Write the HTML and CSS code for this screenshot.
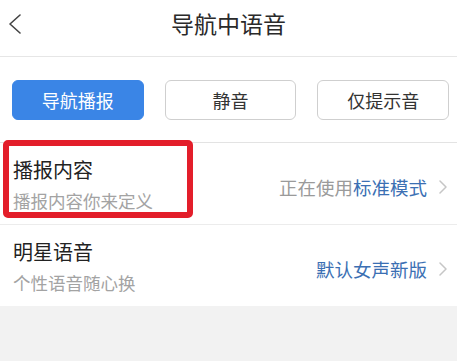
FILE: index.html
```html
<!DOCTYPE html>
<html lang="zh-CN">
<head>
<meta charset="utf-8">
<title>导航中语音</title>
<link rel="stylesheet" href="styles.css">
</head>
<body>
<div class="page">
  <header class="header">
    <span class="back">
      <svg width="14" height="20" viewBox="0 0 14 20"><polyline points="12,1 2,10 12,19" fill="none" stroke="#444" stroke-width="1.6" stroke-linecap="round" stroke-linejoin="round"/></svg>
    </span>
    <h1 class="title">导航中语音</h1>
  </header>
  <section class="modes">
    <button class="mode active">导航播报</button>
    <button class="mode">静音</button>
    <button class="mode">仅提示音</button>
  </section>
  <ul class="list">
    <li class="row">
      <div class="left">
        <div class="name">播报内容</div>
        <div class="desc">播报内容你来定义</div>
      </div>
      <div class="right"><span class="muted">正在使用</span><span class="link">标准模式</span>
        <svg class="chev" width="10" height="14" viewBox="0 0 10 14"><polyline points="2,1 8,7 2,13" fill="none" stroke="#c6c6c6" stroke-width="1.5" stroke-linecap="round" stroke-linejoin="round"/></svg>
      </div>
      <span class="highlight"></span>
    </li>
    <li class="row">
      <div class="left">
        <div class="name">明星语音</div>
        <div class="desc">个性语音随心换</div>
      </div>
      <div class="right"><span class="link">默认女声新版</span>
        <svg class="chev" width="10" height="14" viewBox="0 0 10 14"><polyline points="2,1 8,7 2,13" fill="none" stroke="#c6c6c6" stroke-width="1.5" stroke-linecap="round" stroke-linejoin="round"/></svg>
      </div>
    </li>
  </ul>
</div>
</body>
</html>
```
FILE: styles.css
```css
* { box-sizing: border-box; }
html, body { margin: 0; padding: 0; }
body {
  background: #f2f2f2;
  font-family: "Noto Sans CJK SC", "Noto Sans", sans-serif;
  color: #222;
}
.page { width: 457px; }
.header {
  height: 57px;
  background: #fff;
  border-bottom: 1px solid #e6e6e6;
  display: flex;
  align-items: flex-start;
  position: relative;
}
.back {
  position: absolute;
  left: 8px;
  top: 14px;
  display: block;
  line-height: 0;
}
.title {
  margin: 0;
  width: 100%;
  text-align: center;
  font-size: 23px;
  font-weight: normal;
  line-height: 46px;
  color: #2a2a2a;
}
.modes {
  background: #fff;
  display: grid;
  grid-template-columns: repeat(3, 1fr);
  gap: 21px;
  padding: 23px 8px 22px 12px;
  border-bottom: 1px solid #e3e3e3;
}
.mode {
  height: 40px;
  border: 1px solid #cfcfcf;
  border-radius: 6px;
  background: #fff;
  font-family: inherit;
  font-size: 18px;
  color: #333;
  padding: 0;
}
.mode.active {
  background: #3a85e6;
  border-color: #3a85e6;
  color: #fff;
}
.list {
  list-style: none;
  margin: 0;
  padding: 0;
  background: #fff;
}
.row {
  position: relative;
  display: flex;
  align-items: center;
  justify-content: space-between;
  padding: 14px 9px 10px 13px;
  border-bottom: 1px solid #ececec;
}
.row:last-child { border-bottom: none; }
.name {
  font-size: 20px;
  line-height: 26px;
  color: #222;
}
.desc {
  margin-top: 5px;
  font-size: 17.5px;
  line-height: 26px;
  color: #a3a3a3;
}
.right {
  display: flex;
  align-items: center;
  font-size: 18.5px;
  line-height: 26px;
  margin-top: 2px;
}
.muted { color: #9a9a9a; }
.link { color: #3b6fb3; }
.chev { margin-left: 11px; }
.highlight {
  position: absolute;
  left: 3px;
  top: -3px;
  width: 190px;
  height: 78px;
  border: 6px solid #e31e2a;
  border-radius: 5px;
}
```
